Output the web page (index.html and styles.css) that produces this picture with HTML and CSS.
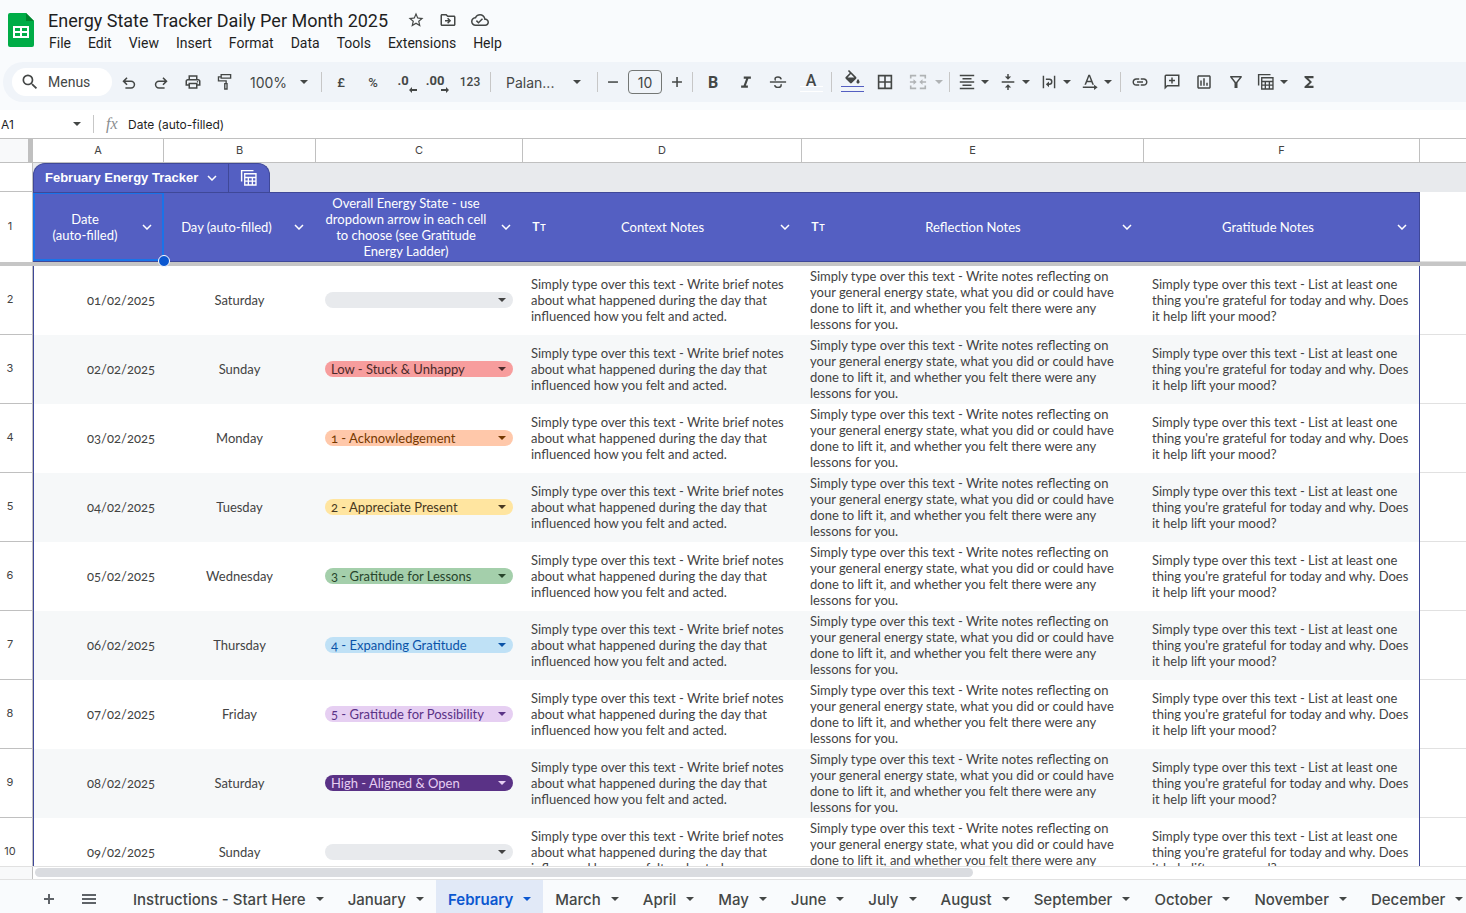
FILE: index.html
```html
<!DOCTYPE html>
<html lang="en">
<head>
    <meta charset="UTF-8">
    <meta name="viewport" content="width=device-width, initial-scale=1.0">
    <title>Energy State Tracker Daily Per Month 2025</title>
    <link rel="stylesheet" href="styles.css">
</head>
<body>
    <!-- Title and menus -->
    <header class="app-header">
        <svg class="logo" viewBox="0 0 26 34">
            <path fill="#00ac47" d="M2 0h16l8 8v24a2 2 0 0 1-2 2H2a2 2 0 0 1-2-2V2a2 2 0 0 1 2-2z"/>
            <path fill="#00832d" d="M18 0l8 8h-8z"/>
            <path fill="#fff" fill-rule="evenodd" d="M5 13h16v12H5zM7 15v3h5v-3zM14 15v3h5v-3zM7 20v3h5v-3zM14 20v3h5v-3z"/>
        </svg>
        <div>
            <div class="title-row">
                <h1>Energy State Tracker Daily Per Month 2025</h1>
                <button class="title-btn" aria-label="Star"><svg class="icon" viewBox="0 0 24 24"><path d="M22 9.24l-7.19-.62L12 2 9.19 8.63 2 9.24l5.46 4.73L5.82 21 12 17.27 18.18 21l-1.63-7.03L22 9.24zM12 15.4l-3.76 2.27 1-4.28-3.32-2.88 4.38-.38L12 6.1l1.71 4.04 4.38.38-3.32 2.88 1 4.28L12 15.4z"/></svg></button>
                <button class="title-btn" aria-label="Move"><svg class="icon" viewBox="0 0 24 24"><path d="M20 6h-8l-2-2H4c-1.1 0-2 .9-2 2v12c0 1.1.9 2 2 2h16c1.1 0 2-.9 2-2V8c0-1.1-.9-2-2-2zm0 12H4V6h5.2l2 2H20v10zm-7.8-1l4-4-4-4-1.400 1.400L12.400 12H8v2h4.400l-1.600 1.600z"/></svg></button>
                <button class="title-btn" aria-label="Saved to Drive"><svg class="icon" viewBox="0 0 24 24"><path d="M19.350 10.040C18.670 6.590 15.640 4 12 4 9.110 4 6.600 5.640 5.350 8.040 2.340 8.360 0 10.910 0 14c0 3.310 2.690 6 6 6h13c2.760 0 5-2.240 5-5 0-2.640-2.050-4.780-4.650-4.960zM19 18H6c-2.210 0-4-1.790-4-4 0-2.050 1.530-3.760 3.560-3.970l1.070-.110.5-.950C8.080 7.140 9.940 6 12 6c2.620 0 4.880 1.860 5.390 4.430l.3 1.500 1.530.110c1.560.1 2.780 1.410 2.780 2.960 0 1.650-1.350 3-3 3zm-9-3.820l-2.090-2.090L6.500 13.500 10 17l6.010-6.010-1.410-1.410z"/></svg></button>
            </div>
            <nav class="menu-bar">
                <button>File</button>
                <button>Edit</button>
                <button>View</button>
                <button>Insert</button>
                <button>Format</button>
                <button>Data</button>
                <button>Tools</button>
                <button>Extensions</button>
                <button>Help</button>
            </nav>
        </div>
    </header>

    <!-- Toolbar -->
    <div class="toolbar">
        <label class="search">
            <svg class="icon" viewBox="0 0 24 24"><path d="M15.500 14h-.79l-.28-.27A6.470 6.470 0 0 0 16 9.500 6.500 6.500 0 1 0 9.500 16c1.610 0 3.090-.59 4.230-1.570l.27.28v.79l5 4.990L20.490 19l-4.990-5zm-6 0C7.010 14 5 11.990 5 9.500S7.010 5 9.500 5 14 7.010 14 9.500 11.990 14 9.500 14z"/></svg>
            <input type="text" placeholder="Menus" aria-label="Menus">
        </label>
        <button class="tool" aria-label="Undo"><svg class="icon" viewBox="0 0 20 20"><path d="M6 17.500v-1.700h6.300a2.900 2.900 0 0 0 0-5.800H6l2.400 2.400-1.200 1.200L2.700 9.150l4.500-4.500 1.200 1.200L6 8.300h6.300a4.600 4.600 0 0 1 0 9.200z"/></svg></button>
        <button class="tool" aria-label="Redo"><svg class="icon" viewBox="0 0 20 20"><path d="M14 17.500v-1.700H7.700a2.900 2.900 0 0 1 0-5.800H14l-2.400 2.400 1.200 1.200 4.500-4.450-4.500-4.500-1.200 1.200L14 8.300H7.700a4.600 4.600 0 0 0 0 9.200z"/></svg></button>
        <button class="tool" aria-label="Print"><svg class="icon" viewBox="0 0 24 24"><path d="M19 8h-1V3H6v5H5c-1.660 0-3 1.340-3 3v6h4v4h12v-4h4v-6c0-1.660-1.340-3-3-3zM8 5h8v3H8V5zm8 14H8v-4h8v4zm2-4v-2H6v2H4v-4c0-.55.45-1 1-1h14c.55 0 1 .45 1 1v4h-2z"/><circle cx="18" cy="11.500" r="1"/></svg></button>
        <button class="tool" aria-label="Paint format"><svg class="icon" viewBox="0 0 20 20"><path fill-rule="evenodd" d="M5 1h12v5.500H5V5H3.500v3H12v3h1v7.500H9V11h1.500V9.500H2v-6h3zM6.500 2.500V5h9V2.500zM10.500 12.500V17h1v-4.500z"/></svg></button>
        <span class="drop zoom"><select aria-label="Zoom"><option>100%</option></select></span>
        <span class="sep"></span>
        <button class="tool text" aria-label="Currency">£</button>
        <button class="tool text" aria-label="Percent">%</button>
        <button class="tool decimal" aria-label="Decrease decimal places">.0<svg viewBox="0 0 8 6"><path d="M3 0v2h5v2H3v2L0 3z"/></svg></button>
        <button class="tool decimal" aria-label="Increase decimal places">.00<svg viewBox="0 0 8 6"><path d="M5 0v2H0v2h5v2l3-3z"/></svg></button>
        <button class="tool text wide" aria-label="More formats">123</button>
        <span class="sep"></span>
        <span class="drop font"><select aria-label="Font"><option>Palan...</option></select></span>
        <span class="sep"></span>
        <button class="tool small" aria-label="Decrease font size"><svg class="icon" viewBox="0 0 20 20"><path d="M4.500 9.200h11v1.700h-11z"/></svg></button>
        <input class="font-size" type="text" value="10" aria-label="Font size">
        <button class="tool small" aria-label="Increase font size"><svg class="icon" viewBox="0 0 20 20"><path d="M9.200 4.500h1.700v4.700h4.600v1.700h-4.600v4.600H9.200v-4.600H4.500V9.200h4.700z"/></svg></button>
        <span class="sep"></span>
        <button class="tool bold" aria-label="Bold">B</button>
        <button class="tool" aria-label="Italic"><svg class="icon" viewBox="0 0 24 24"><path d="M9 4.500v3h3.200L8.800 16.500H5.500v3h9v-3h-2.700L15.200 7.500h3.300v-3z"/></svg></button>
        <button class="tool" aria-label="Strikethrough"><svg class="icon" viewBox="0 0 20 20"><path d="M1 9.200h18v1.600H1z"/><path class="stroke" d="M13.500 7C13.300 5.300 12 4.400 10 4.400S6.700 5.300 6.700 6.800c0 .6.200 1.100.6 1.500M6.300 13.500c.3 1.600 1.700 2.500 3.700 2.500s3.500-.9 3.500-2.400c0-.5-.1-.9-.3-1.200"/></svg></button>
        <button class="tool underline-a" aria-label="Text color">A</button>
        <span class="sep"></span>
        <button class="tool fill" aria-label="Fill color"><svg viewBox="0 0 24 24"><path fill-rule="evenodd" d="M16.560 8.940L7.620 0 6.210 1.410l2.380 2.380-5.150 5.150a1.490 1.490 0 0 0 0 2.120l5.500 5.500c.29.29.68.440 1.060.440s.770-.150 1.060-.440l5.500-5.500c.59-.58.59-1.530 0-2.120zM5.800 9.400L10 5.210l4.200 4.190zM19 11.500s-2 2.170-2 3.500c0 1.100.9 2 2 2s2-.9 2-2c0-1.330-2-3.500-2-3.500z"/></svg></button>
        <button class="tool" aria-label="Borders"><svg class="icon" viewBox="0 0 20 20"><path fill-rule="evenodd" d="M2 2h16v16H2zm1.800 1.800v5.300h5.300V3.800zm7.100 0v5.300h5.300V3.800zm-7.100 7.100v5.300h5.300v-5.300zm7.100 0v5.300h5.300v-5.300z"/></svg></button>
        <button class="tool combo merge" disabled aria-label="Merge cells"><svg class="icon" viewBox="0 0 20 20"><path d="M1 2h7v1.800H2.800V6H1zM12 2h7v4h-1.800V3.800H12zM1 14h1.800v2.200H8V18H1zM17.200 14H19v4h-7v-1.800h5.200zM1 9.100h4V7l3.500 3L5 13v-2.100H1zM19 9.100h-4V7l-3.500 3 3.500 3v-2.100h4z"/></svg></button>
        <span class="sep"></span>
        <button class="tool combo" aria-label="Horizontal align"><svg class="icon" viewBox="0 0 20 20"><path d="M2 2h16v1.700H2zM5 5.600h10v1.700H5zM2 9.200h16v1.700H2zM5 12.700h10v1.700H5zM2 16.300h16V18H2z"/></svg></button>
        <button class="tool combo" aria-label="Vertical align"><svg class="icon" viewBox="0 0 20 20"><path d="M3 9.200h14v1.600H3zM9.200 1h1.600v3H13.500L10 7.500l-3.500-3.500h2.700zM9.200 19h1.600v-3H13.500L10 12.500 6.500 16h2.700z"/></svg></button>
        <button class="tool combo" aria-label="Text wrapping"><svg class="icon" viewBox="0 0 20 20"><path d="M3 3h1.600v14H3zM15.400 3H17v14h-1.600z"/><path class="stroke" d="M6.500 7h3.800a2.800 2.800 0 0 1 0 5.600H9"/><path d="M10 9.500v6.200l-3.500-3.100z"/></svg></button>
        <button class="tool combo" aria-label="Text rotation"><svg class="icon" viewBox="0 0 20 20"><path fill-rule="evenodd" d="M8.200 2h1.800l4.400 11h-1.800l-1.100-2.700H6.700l-1.100 2.700H3.800zM7.300 8.700h3.600L9.100 4zM2 15h12.500v-2l4 2.900-4 2.900v-2H2z"/></svg></button>
        <span class="sep"></span>
        <button class="tool" aria-label="Insert link"><svg class="icon" viewBox="0 0 24 24"><path d="M3.900 12c0-1.710 1.390-3.100 3.100-3.100h4V7H7c-2.760 0-5 2.240-5 5s2.240 5 5 5h4v-1.900H7c-1.710 0-3.100-1.390-3.100-3.100zM8 13h8v-2H8v2zm9-6h-4v1.900h4c1.710 0 3.100 1.390 3.100 3.100s-1.390 3.100-3.100 3.100h-4V17h4c2.760 0 5-2.240 5-5s-2.240-5-5-5z"/></svg></button>
        <button class="tool" aria-label="Insert comment"><svg class="icon" viewBox="0 0 24 24"><path fill-rule="evenodd" d="M22 2H4a2 2 0 0 0-2 2v18l4-4h16zM4 4h16v12H5.200L4 17.200zM11 6h2v3h3v2h-3v3h-2v-3H8V9h3z"/></svg></button>
        <button class="tool" aria-label="Insert chart"><svg class="icon" viewBox="0 0 24 24"><path d="M9 17H7v-7h2v7zm4 0h-2V7h2v10zm4 0h-2v-4h2v4zm2 2H5V5h14v14zm0-16H5c-1.100 0-2 .9-2 2v14c0 1.100.9 2 2 2h14c1.100 0 2-.9 2-2V5c0-1.100-.9-2-2-2z"/></svg></button>
        <button class="tool" aria-label="Create a filter"><svg class="icon" viewBox="0 0 24 24"><path d="M7 6h10l-5.010 6.300L7 6zm-2.750-.39C6.270 8.200 10 13 10 13v7h4v-7s3.720-4.800 5.740-7.390A.998.998 0 0 0 18.950 4H5.040c-.83 0-1.300.95-.79 1.610z"/></svg></button>
        <button class="tool combo" aria-label="Table views"><svg class="icon" viewBox="0 0 20 20"><path fill-rule="evenodd" d="M1 1h14v1.600H2.600V14H1zM4.500 4.500h14v14h-14zM6 6v2.600h11V6zm0 4.200v2.500h2.500v-2.500zm4 0v2.500h3v-2.500zm4.500 0v2.500H17v-2.500zM6 14.300V17h2.500v-2.700zm4 0V17h3v-2.700zm4.500 0V17H17v-2.700z"/></svg></button>
        <button class="tool" aria-label="Functions"><svg class="icon" viewBox="0 0 24 24"><path d="M18 4H6v2l6.500 6L6 18v2h12v-3h-7l5-5-5-5h7z"/></svg></button>
    </div>

    <!-- Formula bar -->
    <div class="formula-bar">
        <span class="drop name"><input type="text" value="A1" aria-label="Name box"></span>
        <span class="fx">fx</span>
        <input class="formula" type="text" value="Date (auto-filled)" aria-label="Formula">
    </div>

    <!-- Grid -->
    <main class="grid">
        <table>
            <colgroup>
                <col class="col-num"><col class="col-a"><col class="col-b"><col class="col-c"><col class="col-d"><col class="col-e"><col class="col-f"><col>
            </colgroup>
            <thead>
                <tr class="letters">
                    <th class="corner"></th><th>A</th><th>B</th><th>C</th><th>D</th><th>E</th><th>F</th><th></th>
                </tr>
                <tr class="tab-row">
                    <th class="num"></th>
                    <td colspan="7">
                        <div class="table-tab">
                            <button class="tab-name">February Energy Tracker <svg class="chevron" viewBox="0 0 10 6"><path d="M1 1l4 4 4-4"/></svg></button>
                            <button class="tab-view" aria-label="Table view"><svg viewBox="0 0 20 20"><path fill-rule="evenodd" d="M1 1h14v1.600H2.600V14H1zM4.500 4.500h14v14h-14zM6 6v2.600h11V6zm0 4.200v2.500h2.500v-2.500zm4 0v2.500h3v-2.500zm4.500 0v2.500H17v-2.500zM6 14.300V17h2.500v-2.700zm4 0V17h3v-2.700zm4.500 0V17H17v-2.700z"/></svg></button>
                        </div>
                    </td>
                </tr>
                <tr class="head-row" id="head-row">
                    <th class="num">1</th>
                </tr>
                <tr class="freeze"><td colspan="8"></td></tr>
            </thead>
            <tbody id="rows"></tbody>
        </table>
    </main>

    <div class="scroll-row">
        <div class="scroll-corner"></div>
        <div class="scroll-track"><div class="scroll-thumb"></div></div>
    </div>

    <!-- Sheet tabs -->
    <footer class="sheets" id="sheets">
        <button class="sheet-btn" aria-label="Add sheet"><svg class="icon" viewBox="0 0 20 20"><path d="M9 5h2v4h4v2h-4v4H9v-4H5V9h4z"/></svg></button>
        <button class="sheet-btn" aria-label="All sheets"><svg class="icon" viewBox="0 0 20 20"><path d="M3 5h14v2H3zM3 9h14v2H3zM3 13h14v2H3z"/></svg></button>
    </footer>

    <script>
        const chevron = '<svg class="chevron" viewBox="0 0 10 6"><path d="M1 1l4 4 4-4"/></svg>';

        const columns = [
            { title: 'Date <span class="nowrap">(auto-filled)</span>' },
            { title: 'Day (auto-filled)' },
            { title: 'Overall Energy State - use dropdown arrow in each cell to choose (see Gratitude Energy Ladder)' },
            { title: 'Context Notes', text: true },
            { title: 'Reflection Notes', text: true },
            { title: 'Gratitude Notes' }
        ];

        const days = [
            ['01/02/2025', 'Saturday', '', 'empty'],
            ['02/02/2025', 'Sunday', 'Low - Stuck & Unhappy', 'low'],
            ['03/02/2025', 'Monday', '1 - Acknowledgement', 'one'],
            ['04/02/2025', 'Tuesday', '2 - Appreciate Present', 'two'],
            ['05/02/2025', 'Wednesday', '3 - Gratitude for Lessons', 'three'],
            ['06/02/2025', 'Thursday', '4 - Expanding Gratitude', 'four'],
            ['07/02/2025', 'Friday', '5 - Gratitude for Possibility', 'five'],
            ['08/02/2025', 'Saturday', 'High - Aligned & Open', 'high'],
            ['09/02/2025', 'Sunday', '', 'empty']
        ];

        const context = 'Simply type over this text - Write brief notes about what happened during the day that influenced how you felt and acted.';
        const reflection = 'Simply type over this text - Write notes reflecting on your general energy state, what you did or could have done to lift it, and whether you felt there were any lessons for you.';
        const gratitude = "Simply type over this text - List at least one thing you're grateful for today and why. Does it help lift your mood?";

        const sheets = ['Instructions - Start Here', 'January', 'February', 'March', 'April', 'May', 'June',
            'July', 'August', 'September', 'October', 'November', 'December'];

        document.getElementById('head-row').innerHTML += columns.map((col, i) => `
            <th class="head${i === 0 ? ' selected' : ''}">
                <div class="head-cell">
                    ${col.text ? '<span class="type">T<small>T</small></span>' : ''}
                    <span class="head-title">${col.title}</span>
                    <button class="head-menu" aria-label="Column menu">${chevron}</button>
                </div>
            </th>
        `).join('') + '<td></td>';

        document.getElementById('rows').innerHTML = days.map((day, i) => `
            <tr>
                <th class="num">${i + 2}</th>
                <td class="date">${day[0]}</td>
                <td class="day">${day[1]}</td>
                <td class="state">
                    <span class="chip ${day[3]}"><select aria-label="Energy state ${day[0]}"><option>${day[2]}</option></select></span>
                </td>
                <td>${context}</td>
                <td>${reflection}</td>
                <td class="last">${gratitude}</td>
                <td class="blank"></td>
            </tr>
        `).join('');

        document.getElementById('sheets').innerHTML += sheets.map(name => `
            <button class="sheet${name === 'February' ? ' active' : ''}">${name}</button>
        `).join('');
    </script>
</body>
</html>
```
FILE: styles.css
```css
* {
    box-sizing: border-box;
}
body {
    margin: 0;
    height: 100vh;
    display: flex;
    flex-direction: column;
    overflow: hidden;
    background: #f9fbfd;
    color: #1f1f1f;
    font-family: Inter, "Liberation Sans", sans-serif;
    font-size: 14px;
}
button, input, select {
    font: inherit;
    color: inherit;
    margin: 0;
    padding: 0;
    border: none;
    background: none;
    outline: none;
}
select {
    appearance: none;
}
button {
    cursor: pointer;
}
svg {
    fill: currentColor;
    display: block;
}
.icon {
    width: 20px;
    height: 20px;
    flex: none;
}
.stroke {
    fill: none;
    stroke: currentColor;
    stroke-width: 1.6;
}
.chevron {
    width: 10px;
    height: 6px;
    fill: none;
    stroke: #fff;
    stroke-width: 1.5;
}
.nowrap {
    white-space: nowrap;
}

/* header */
.app-header {
    display: flex;
    height: 62px;
    padding-left: 8px;
    flex: none;
}
.logo {
    width: 26px;
    height: 34px;
    margin: 13px 6px 0 0;
}
.title-row {
    display: flex;
    align-items: center;
    height: 24px;
    margin-top: 8px;
    padding-left: 8px;
}
.title-row h1 {
    margin: 0 19px 0 0;
    font-family: Roboto, sans-serif;
    font-size: 18px;
    font-weight: 400;
}
.title-btn {
    width: 32px;
    color: #444746;
}
.title-btn .icon {
    width: 18px;
    height: 18px;
}
.menu-bar {
    display: flex;
    gap: 1px;
    padding-left: 1px;
}
.menu-bar button {
    height: 22px;
    padding: 0 8px;
    font-family: Roboto, sans-serif;
}

/* toolbar */
.toolbar {
    display: flex;
    align-items: center;
    flex: none;
    height: 40px;
    margin-left: 3px;
    padding-left: 9px;
    background: #f0f4f9;
    border-radius: 20px 0 0 20px;
    color: #444746;
    font-family: Roboto, sans-serif;
}
.search {
    display: flex;
    align-items: center;
    gap: 8px;
    width: 100px;
    height: 28px;
    padding-left: 8px;
    margin-right: 1px;
    background: #fff;
    border-radius: 14px;
}
.search input {
    width: 56px;
}
.search input::placeholder {
    color: #444746;
    opacity: 1;
}
.tool {
    display: flex;
    align-items: center;
    justify-content: center;
    flex: none;
    width: 32px;
    height: 30px;
}
.tool .icon {
    width: 18px;
    height: 18px;
}
.tool.text {
    font-size: 13px;
    font-weight: 500;
}
.tool.wide {
    width: 34px;
    font-size: 12px;
}
.tool.small {
    width: 24px;
}
.tool.bold {
    width: 34px;
    font-size: 16px;
    font-weight: 700;
}
.tool.decimal {
    position: relative;
    padding: 0 4px 4px 0;
    font-size: 13px;
    font-weight: 700;
}
.tool.decimal svg {
    position: absolute;
    right: 4px;
    bottom: 4px;
    width: 8px;
    height: 6px;
}
.sep {
    flex: none;
    width: 1px;
    height: 20px;
    margin: 0 3px;
    background: #c7c7c7;
}
.drop {
    display: flex;
    align-items: center;
    position: relative;
}
.drop::after, .combo::after, .chip::after, .sheet::after {
    content: "";
    border: 4px solid transparent;
    border-top-color: currentColor;
    border-bottom: none;
}
.drop::after {
    position: absolute;
    right: 13px;
    pointer-events: none;
}
.zoom, .font {
    font-family: Inter, sans-serif;
}
.zoom, .zoom select {
    width: 77px;
}
.zoom::after {
    right: 10px;
}
.zoom select {
    padding-left: 9px;
}
.font, .font select {
    width: 100px;
}
.font select {
    padding-left: 12px;
}
.font-size {
    width: 34px;
    height: 24px;
    margin: 0 3px;
    border: 1px solid #747775;
    border-radius: 4px;
    text-align: center;
    font-family: Inter, sans-serif;
}
.tool.combo {
    width: 41px;
    gap: 5px;
    justify-content: flex-start;
    padding-left: 5px;
}
.tool.merge {
    width: 45px;
    padding-left: 8px;
    gap: 8px;
    color: #b0b3b5;
}
.underline-a, .fill {
    position: relative;
    width: 34px;
}
.underline-a {
    padding-bottom: 3px;
    font-size: 16px;
    font-weight: 500;
}
.underline-a::after, .fill::after {
    content: "";
    position: absolute;
    left: 6px;
    right: 5px;
    bottom: 5px;
    height: 4px;
    border: solid #fff;
    border-width: 1px 0;
}
.fill::after {
    border-color: #545fc2;
}
.fill svg {
    width: 19px;
    height: 19px;
    margin-bottom: 6px;
}

/* formula bar */
.formula-bar {
    display: flex;
    align-items: center;
    flex: none;
    height: 28px;
    margin-top: 8px;
    background: #fff;
    font-size: 12px;
}
.name {
    width: 94px;
    height: 18px;
    border-right: 1px solid #c7c7c7;
    color: #444746;
}
.name input {
    width: 70px;
    padding-left: 1px;
    color: #1f1f1f;
}
.name::after {
    right: 12px;
}
.fx {
    width: 34px;
    padding-left: 12px;
    color: #8a8d8f;
    font-family: "Liberation Serif", serif;
    font-size: 16px;
    font-style: italic;
}
.formula {
    flex: 1;
}

/* grid */
.grid {
    flex: 1;
    min-height: 0;
    overflow: hidden;
    background: #fff;
    border-top: 1px solid #c0c0c0;
}
table {
    width: 100%;
    table-layout: fixed;
    border-collapse: separate;
    border-spacing: 0;
    font-family: Lato, sans-serif;
    font-size: 13px;
    font-variant-numeric: oldstyle-nums;
    line-height: 16px;
    color: #434343;
}
th, td {
    padding: 0;
    font-weight: 400;
}
.col-num { width: 33px; }
.col-a { width: 131px; }
.col-b { width: 152px; }
.col-c { width: 207px; }
.col-d { width: 279px; }
.col-e { width: 342px; }
.col-f { width: 276px; }
.letters th {
    height: 24px;
    padding-bottom: 2px;
    border-right: 1px solid #c0c0c0;
    border-bottom: 1px solid #c0c0c0;
    font-family: Inter, sans-serif;
    font-size: 11px;
}
.letters th:last-child {
    border-right: none;
}
.letters .corner {
    background: #f8f9fa;
    border-right: 5px solid #c0c0c0;
}
.num {
    padding: 0 12px 2px 0;
    border-right: 1px solid #c0c0c0;
    border-bottom: 1px solid #c0c0c0;
    font-family: Inter, sans-serif;
    font-size: 11px;
    font-variant-numeric: normal;
}
.tab-row td {
    height: 29px;
    background: #e8eaed;
}
.table-tab {
    display: flex;
    width: 237px;
    height: 29px;
    overflow: hidden;
    background: #545fc2;
    border: 1px solid #3f4898;
    border-bottom: none;
    border-radius: 12px 12px 0 0;
    color: #fff;
}
.tab-name {
    display: flex;
    align-items: center;
    gap: 9px;
    width: 195px;
    padding-left: 11px;
    border-right: 1px solid #3f4898;
    font-family: "Liberation Sans", sans-serif;
    font-size: 13px;
    font-weight: 700;
    white-space: nowrap;
}
.tab-view {
    display: flex;
    align-items: center;
    justify-content: center;
    flex: 1;
}
.tab-view svg {
    width: 18px;
    height: 18px;
}
.head-row .num {
    border-bottom: none;
}
.head-row td {
    border-bottom: 1px solid #e1e1e1;
}
.head {
    height: 70px;
    background: #545fc2;
    border-top: 1px solid #3f4898;
    border-bottom: 1px solid #3f4898;
    color: #fff;
}
.head:nth-child(7) {
    border-right: 1px solid #3f4898;
}
.head-cell {
    display: flex;
    align-items: center;
    padding-left: 7px;
}
.head-title {
    flex: 1;
    text-align: center;
}
.head-menu {
    display: flex;
    justify-content: center;
    flex: none;
    width: 34px;
}
.type {
    width: 27px;
    padding-left: 2px;
    text-align: left;
    font-family: Inter, sans-serif;
    font-size: 12px;
    font-weight: 600;
}
.type small {
    font-size: 9px;
}
.selected {
    position: relative;
    box-shadow: inset 2px 0 #1a73e8, inset -2px 0 #1a73e8, inset 0 1px #1a73e8, inset 0 -2px #1a73e8;
}
/* fill handle of the selected cell */
.selected::after {
    content: "";
    position: absolute;
    right: -6px;
    bottom: -6px;
    width: 10px;
    height: 10px;
    background: #0b57d0;
    border: 1px solid #fff;
    border-radius: 50%;
    z-index: 1;
}
.freeze td {
    height: 4px;
    background: #c6c6c6;
}
tbody td {
    height: 69px;
    padding: 0 9px 2px 8px;
}
tbody tr:nth-child(even) td {
    background: #f6f8f9;
}
tbody .date {
    border-left: 1px solid #3f4898;
    text-align: right;
}
tbody .day {
    text-align: center;
}
tbody .last {
    border-right: 1px solid #3f4898;
}
tbody tr .blank, tbody tr:nth-child(even) .blank {
    background: #fff;
    border-bottom: 1px solid #e1e1e1;
}
.chip {
    display: flex;
    align-items: center;
    position: relative;
    height: 16px;
    margin: 0 1px;
    border-radius: 8px;
}
.chip::after {
    position: absolute;
    right: 7px;
    pointer-events: none;
}
.chip select {
    width: 100%;
    height: 16px;
    padding-left: 6px;
}
.empty { background: #e8eaed; color: #434343; }
.low { background: #f79d9d; color: #4a2a2a; }
.one { background: #ffc8aa; color: #753800; }
.two { background: #ffe5a0; color: #473821; }
.three { background: #a4cfab; color: #27452b; }
.four { background: #bfe1f6; color: #0a53a8; }
.five { background: #e6cff2; color: #5a3286; }
.high { background: #5a3286; color: #e6cff2; }

/* scrollbar */
.scroll-row {
    display: flex;
    flex: none;
    height: 14px;
    background: #fff;
    border-top: 1px solid #e1e1e1;
    border-bottom: 1px solid #e1e1e1;
}
.scroll-corner {
    width: 33px;
    background: #f8f9fa;
    border-right: 1px solid #c0c0c0;
}
.scroll-track {
    flex: 1;
    padding: 1px 10px 1px 2px;
}
.scroll-thumb {
    width: 66%;
    height: 9px;
    background: #dadce0;
    border-radius: 5px;
}

/* sheet tabs */
.sheets {
    display: flex;
    flex: none;
    height: 33px;
    padding-left: 29px;
    overflow: hidden;
    color: #444746;
}
.sheet-btn {
    display: flex;
    align-items: center;
    justify-content: center;
    flex: none;
    width: 40px;
    height: 38px;
}
.sheet-btn .icon {
    fill: #5f6368;
}
.sheet {
    display: flex;
    align-items: center;
    gap: 10px;
    flex: none;
    height: 38px;
    padding: 0 12px;
    font-size: 15px;
    font-weight: 500;
}
.sheet-btn + .sheet {
    margin-left: 12px;
}
.sheet.active {
    background: #e1e9f7;
    color: #0b57d0;
    font-weight: 600;
}
```
